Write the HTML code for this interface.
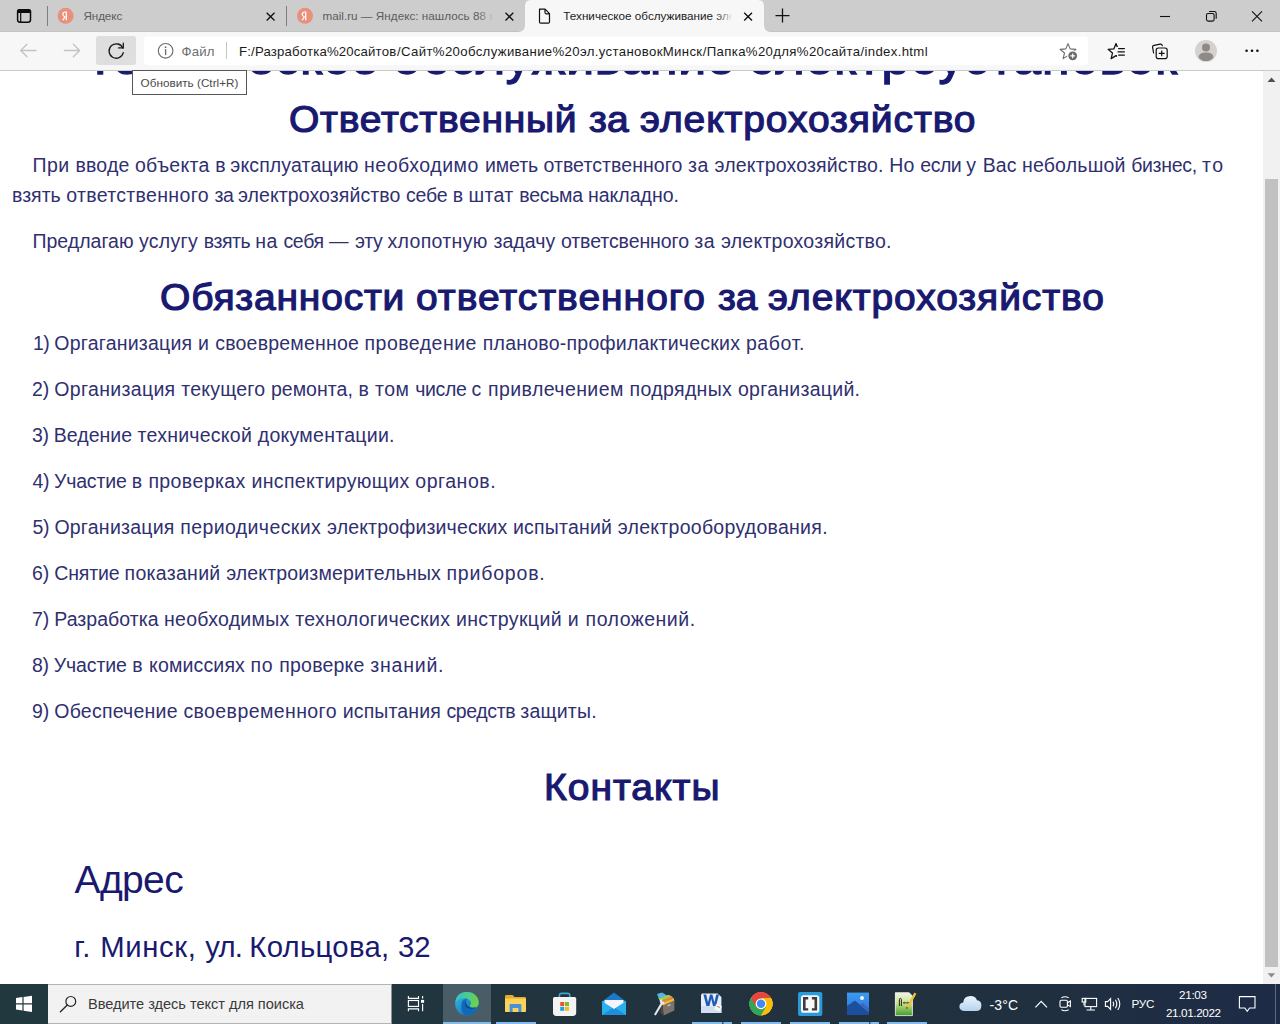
<!DOCTYPE html>
<html lang="ru"><head><meta charset="utf-8"><title>Техническое обслуживание электроустановок</title>
<style>
html,body{margin:0;padding:0;width:1280px;height:1024px;overflow:hidden;background:#fff;font-family:"Liberation Sans",sans-serif;}
.t{position:absolute;white-space:pre;line-height:1;font-family:"Liberation Sans",sans-serif;}
#tabbar{position:absolute;left:0;top:0;width:1280px;height:31px;background:#cdcdcd;border-bottom:1px solid #c3c3c3;}
#toolbar{position:absolute;left:0;top:32px;width:1280px;height:38px;background:#f7f7f7;border-bottom:1px solid #c9c9c9;}
#page{position:absolute;left:0;top:71px;width:1263px;height:913px;overflow:hidden;background:#fff;}
#pagein{position:absolute;left:0;top:-71px;width:1263px;height:1024px;}
#sb{position:absolute;left:1263px;top:71px;width:17px;height:913px;background:#f1f1f1;}
#sbthumb{position:absolute;left:2px;top:108px;width:13px;height:788px;background:#c1c1c1;}
#taskbar{position:absolute;left:0;top:984px;width:1280px;height:40px;background:linear-gradient(90deg,#22383f 0%,#21343e 45%,#21303e 78%,#1d2b47 100%);}
#layer{position:absolute;left:0;top:0;width:1280px;height:1024px;pointer-events:none;}
</style></head>
<body>
<div id="page"><div id="pagein">
<div class="t" style="left:85.00px;top:33.00px;font-size:48.5px;font-weight:normal;-webkit-text-stroke:1.4px #191970;transform-origin:0 0;transform:scaleX(1.03);color:#191970;letter-spacing:0.200px">Техническое </div>
<div class="t" style="left:393.00px;top:33.00px;font-size:48.5px;font-weight:normal;-webkit-text-stroke:1.4px #191970;transform-origin:0 0;transform:scaleX(1.03);color:#191970;letter-spacing:0.692px">обслуживание </div>
<div class="t" style="left:750.00px;top:33.00px;font-size:48.5px;font-weight:normal;-webkit-text-stroke:1.4px #191970;transform-origin:0 0;transform:scaleX(1.03);color:#191970;letter-spacing:0.971px">электроустановок</div>
<div class="t" style="left:289.00px;top:101.00px;font-size:37.5px;font-weight:normal;-webkit-text-stroke:1.2px #191970;transform-origin:0 0;transform:scaleX(1.04);color:#191970;letter-spacing:0.724px">Ответственный </div>
<div class="t" style="left:588.90px;top:101.00px;font-size:37.5px;font-weight:normal;-webkit-text-stroke:1.2px #191970;transform-origin:0 0;transform:scaleX(1.04);color:#191970;letter-spacing:0.126px">за </div>
<div class="t" style="left:639.70px;top:101.00px;font-size:37.5px;font-weight:normal;-webkit-text-stroke:1.2px #191970;transform-origin:0 0;transform:scaleX(1.04);color:#191970;letter-spacing:0.853px">электрохозяйство</div>
<div class="t" style="left:32.50px;top:156.00px;font-size:19.5px;font-weight:normal;color:#303070;letter-spacing:0.482px">При </div>
<div class="t" style="left:75.60px;top:156.00px;font-size:19.5px;font-weight:normal;color:#303070;letter-spacing:0.140px">вводе </div>
<div class="t" style="left:135.00px;top:156.00px;font-size:19.5px;font-weight:normal;color:#303070;letter-spacing:0.272px">объекта </div>
<div class="t" style="left:215.30px;top:156.00px;font-size:19.5px;font-weight:normal;color:#303070;letter-spacing:-0.391px">в </div>
<div class="t" style="left:230.30px;top:156.00px;font-size:19.5px;font-weight:normal;color:#303070;letter-spacing:0.131px">эксплуатацию </div>
<div class="t" style="left:364.00px;top:156.00px;font-size:19.5px;font-weight:normal;color:#303070;letter-spacing:0.548px">необходимо </div>
<div class="t" style="left:484.90px;top:156.00px;font-size:19.5px;font-weight:normal;color:#303070;letter-spacing:-0.086px">иметь </div>
<div class="t" style="left:543.40px;top:156.00px;font-size:19.5px;font-weight:normal;color:#303070;letter-spacing:0.080px">ответственного </div>
<div class="t" style="left:688.00px;top:156.00px;font-size:19.5px;font-weight:normal;color:#303070;letter-spacing:0.460px">за </div>
<div class="t" style="left:714.60px;top:156.00px;font-size:19.5px;font-weight:normal;color:#303070;letter-spacing:0.147px">электрохозяйство. </div>
<div class="t" style="left:889.20px;top:156.00px;font-size:19.5px;font-weight:normal;color:#303070;letter-spacing:0.247px">Но </div>
<div class="t" style="left:920.30px;top:156.00px;font-size:19.5px;font-weight:normal;color:#303070;letter-spacing:-0.469px">если </div>
<div class="t" style="left:966.25px;top:156.00px;font-size:19.5px;font-weight:normal;color:#303070;letter-spacing:0.689px">у </div>
<div class="t" style="left:982.80px;top:156.00px;font-size:19.5px;font-weight:normal;color:#303070;letter-spacing:0.042px">Вас </div>
<div class="t" style="left:1022.00px;top:156.00px;font-size:19.5px;font-weight:normal;color:#303070;letter-spacing:0.187px">небольшой </div>
<div class="t" style="left:1131.20px;top:156.00px;font-size:19.5px;font-weight:normal;color:#303070;letter-spacing:-0.313px">бизнес, </div>
<div class="t" style="left:1201.90px;top:156.00px;font-size:19.5px;font-weight:normal;color:#303070;letter-spacing:1.600px">то</div>
<div class="t" style="left:12.00px;top:186.00px;font-size:19.5px;font-weight:normal;color:#303070;letter-spacing:0.007px">взять </div>
<div class="t" style="left:66.20px;top:186.00px;font-size:19.5px;font-weight:normal;color:#303070;letter-spacing:0.333px">ответственного </div>
<div class="t" style="left:214.60px;top:186.00px;font-size:19.5px;font-weight:normal;color:#303070;letter-spacing:-0.606px">за </div>
<div class="t" style="left:238.00px;top:186.00px;font-size:19.5px;font-weight:normal;color:#303070;letter-spacing:0.081px">электрохозяйство </div>
<div class="t" style="left:405.90px;top:186.00px;font-size:19.5px;font-weight:normal;color:#303070;letter-spacing:-0.149px">себе </div>
<div class="t" style="left:452.75px;top:186.00px;font-size:19.5px;font-weight:normal;color:#303070;letter-spacing:-0.066px">в </div>
<div class="t" style="left:468.40px;top:186.00px;font-size:19.5px;font-weight:normal;color:#303070;letter-spacing:0.355px">штат </div>
<div class="t" style="left:519.30px;top:186.00px;font-size:19.5px;font-weight:normal;color:#303070;letter-spacing:-0.268px">весьма </div>
<div class="t" style="left:588.00px;top:186.00px;font-size:19.5px;font-weight:normal;color:#303070;letter-spacing:0.000px">накладно.</div>
<div class="t" style="left:32.50px;top:232.00px;font-size:19.5px;font-weight:normal;color:#303070;letter-spacing:0.005px">Предлагаю </div>
<div class="t" style="left:139.00px;top:232.00px;font-size:19.5px;font-weight:normal;color:#303070;letter-spacing:0.285px">услугу </div>
<div class="t" style="left:203.70px;top:232.00px;font-size:19.5px;font-weight:normal;color:#303070;letter-spacing:-0.426px">взять </div>
<div class="t" style="left:255.30px;top:232.00px;font-size:19.5px;font-weight:normal;color:#303070;letter-spacing:0.351px">на </div>
<div class="t" style="left:283.40px;top:232.00px;font-size:19.5px;font-weight:normal;color:#303070;letter-spacing:-0.299px">себя </div>
<div class="t" style="left:329.00px;top:232.00px;font-size:19.5px;font-weight:normal;color:#303070;letter-spacing:0.539px">— </div>
<div class="t" style="left:355.00px;top:232.00px;font-size:19.5px;font-weight:normal;color:#303070;letter-spacing:-0.336px">эту </div>
<div class="t" style="left:387.50px;top:232.00px;font-size:19.5px;font-weight:normal;color:#303070;letter-spacing:0.323px">хлопотную </div>
<div class="t" style="left:493.40px;top:232.00px;font-size:19.5px;font-weight:normal;color:#303070;letter-spacing:0.083px">задачу </div>
<div class="t" style="left:560.90px;top:232.00px;font-size:19.5px;font-weight:normal;color:#303070;letter-spacing:-0.076px">ответсвенного </div>
<div class="t" style="left:694.30px;top:232.00px;font-size:19.5px;font-weight:normal;color:#303070;letter-spacing:0.460px">за </div>
<div class="t" style="left:720.90px;top:232.00px;font-size:19.5px;font-weight:normal;color:#303070;letter-spacing:0.256px">электрохозяйство.</div>
<div class="t" style="left:159.50px;top:279.00px;font-size:37.5px;font-weight:normal;-webkit-text-stroke:1.2px #191970;transform-origin:0 0;transform:scaleX(1.04);color:#191970;letter-spacing:0.764px">Обязанности </div>
<div class="t" style="left:416.30px;top:279.00px;font-size:37.5px;font-weight:normal;-webkit-text-stroke:1.2px #191970;transform-origin:0 0;transform:scaleX(1.04);color:#191970;letter-spacing:0.955px">ответственного </div>
<div class="t" style="left:718.00px;top:279.00px;font-size:37.5px;font-weight:normal;-webkit-text-stroke:1.2px #191970;transform-origin:0 0;transform:scaleX(1.04);color:#191970;letter-spacing:-0.034px">за </div>
<div class="t" style="left:768.30px;top:279.00px;font-size:37.5px;font-weight:normal;-webkit-text-stroke:1.2px #191970;transform-origin:0 0;transform:scaleX(1.04);color:#191970;letter-spacing:0.878px">электрохозяйство</div>
<div class="t" style="left:33.00px;top:334.00px;font-size:19.5px;font-weight:normal;color:#303070;letter-spacing:-0.489px">1) </div>
<div class="t" style="left:54.30px;top:334.00px;font-size:19.5px;font-weight:normal;color:#303070;letter-spacing:0.224px">Оргаганизация </div>
<div class="t" style="left:198.00px;top:334.00px;font-size:19.5px;font-weight:normal;color:#303070;letter-spacing:0.469px">и </div>
<div class="t" style="left:215.25px;top:334.00px;font-size:19.5px;font-weight:normal;color:#303070;letter-spacing:0.201px">своевременное </div>
<div class="t" style="left:364.60px;top:334.00px;font-size:19.5px;font-weight:normal;color:#303070;letter-spacing:0.471px">проведение </div>
<div class="t" style="left:482.75px;top:334.00px;font-size:19.5px;font-weight:normal;color:#303070;letter-spacing:0.237px">планово-профилактических </div>
<div class="t" style="left:745.90px;top:334.00px;font-size:19.5px;font-weight:normal;color:#303070;letter-spacing:0.620px">работ.</div>
<div class="t" style="left:32.00px;top:380.00px;font-size:19.5px;font-weight:normal;color:#303070;letter-spacing:-0.155px">2) </div>
<div class="t" style="left:54.30px;top:380.00px;font-size:19.5px;font-weight:normal;color:#303070;letter-spacing:0.327px">Организация </div>
<div class="t" style="left:181.25px;top:380.00px;font-size:19.5px;font-weight:normal;color:#303070;letter-spacing:0.218px">текущего </div>
<div class="t" style="left:270.90px;top:380.00px;font-size:19.5px;font-weight:normal;color:#303070;letter-spacing:0.043px">ремонта, </div>
<div class="t" style="left:358.40px;top:380.00px;font-size:19.5px;font-weight:normal;color:#303070;letter-spacing:0.409px">в </div>
<div class="t" style="left:375.00px;top:380.00px;font-size:19.5px;font-weight:normal;color:#303070;letter-spacing:0.465px">том </div>
<div class="t" style="left:415.25px;top:380.00px;font-size:19.5px;font-weight:normal;color:#303070;letter-spacing:-0.367px">числе </div>
<div class="t" style="left:471.50px;top:380.00px;font-size:19.5px;font-weight:normal;color:#303070;letter-spacing:0.664px">с </div>
<div class="t" style="left:488.00px;top:380.00px;font-size:19.5px;font-weight:normal;color:#303070;letter-spacing:0.421px">привлечением </div>
<div class="t" style="left:629.60px;top:380.00px;font-size:19.5px;font-weight:normal;color:#303070;letter-spacing:0.352px">подрядных </div>
<div class="t" style="left:738.00px;top:380.00px;font-size:19.5px;font-weight:normal;color:#303070;letter-spacing:0.273px">организаций.</div>
<div class="t" style="left:32.00px;top:426.00px;font-size:19.5px;font-weight:normal;color:#303070;letter-spacing:-0.322px">3) </div>
<div class="t" style="left:53.80px;top:426.00px;font-size:19.5px;font-weight:normal;color:#303070;letter-spacing:0.015px">Ведение </div>
<div class="t" style="left:137.50px;top:426.00px;font-size:19.5px;font-weight:normal;color:#303070;letter-spacing:0.258px">технической </div>
<div class="t" style="left:257.80px;top:426.00px;font-size:19.5px;font-weight:normal;color:#303070;letter-spacing:0.267px">документации.</div>
<div class="t" style="left:32.60px;top:472.00px;font-size:19.5px;font-weight:normal;color:#303070;letter-spacing:-0.455px">4) </div>
<div class="t" style="left:54.00px;top:472.00px;font-size:19.5px;font-weight:normal;color:#303070;letter-spacing:-0.179px">Участие </div>
<div class="t" style="left:131.80px;top:472.00px;font-size:19.5px;font-weight:normal;color:#303070;letter-spacing:0.409px">в </div>
<div class="t" style="left:148.40px;top:472.00px;font-size:19.5px;font-weight:normal;color:#303070;letter-spacing:0.404px">проверках </div>
<div class="t" style="left:251.50px;top:472.00px;font-size:19.5px;font-weight:normal;color:#303070;letter-spacing:0.350px">инспектирующих </div>
<div class="t" style="left:415.25px;top:472.00px;font-size:19.5px;font-weight:normal;color:#303070;letter-spacing:0.536px">органов.</div>
<div class="t" style="left:32.50px;top:518.00px;font-size:19.5px;font-weight:normal;color:#303070;letter-spacing:-0.289px">5) </div>
<div class="t" style="left:54.40px;top:518.00px;font-size:19.5px;font-weight:normal;color:#303070;letter-spacing:0.235px">Организация </div>
<div class="t" style="left:180.25px;top:518.00px;font-size:19.5px;font-weight:normal;color:#303070;letter-spacing:0.397px">периодических </div>
<div class="t" style="left:327.00px;top:518.00px;font-size:19.5px;font-weight:normal;color:#303070;letter-spacing:0.154px">электрофизических </div>
<div class="t" style="left:513.00px;top:518.00px;font-size:19.5px;font-weight:normal;color:#303070;letter-spacing:0.200px">испытаний </div>
<div class="t" style="left:617.75px;top:518.00px;font-size:19.5px;font-weight:normal;color:#303070;letter-spacing:0.276px">электрооборудования.</div>
<div class="t" style="left:32.00px;top:564.00px;font-size:19.5px;font-weight:normal;color:#303070;letter-spacing:-0.155px">6) </div>
<div class="t" style="left:54.30px;top:564.00px;font-size:19.5px;font-weight:normal;color:#303070;letter-spacing:-0.171px">Снятие </div>
<div class="t" style="left:124.60px;top:564.00px;font-size:19.5px;font-weight:normal;color:#303070;letter-spacing:0.285px">показаний </div>
<div class="t" style="left:226.20px;top:564.00px;font-size:19.5px;font-weight:normal;color:#303070;letter-spacing:0.141px">электроизмерительных </div>
<div class="t" style="left:446.50px;top:564.00px;font-size:19.5px;font-weight:normal;color:#303070;letter-spacing:0.812px">приборов.</div>
<div class="t" style="left:32.10px;top:610.00px;font-size:19.5px;font-weight:normal;color:#303070;letter-spacing:-0.205px">7) </div>
<div class="t" style="left:54.25px;top:610.00px;font-size:19.5px;font-weight:normal;color:#303070;letter-spacing:0.036px">Разработка </div>
<div class="t" style="left:164.00px;top:610.00px;font-size:19.5px;font-weight:normal;color:#303070;letter-spacing:0.292px">необходимых </div>
<div class="t" style="left:295.30px;top:610.00px;font-size:19.5px;font-weight:normal;color:#303070;letter-spacing:0.296px">технологических </div>
<div class="t" style="left:455.90px;top:610.00px;font-size:19.5px;font-weight:normal;color:#303070;letter-spacing:0.384px">инструкций </div>
<div class="t" style="left:567.75px;top:610.00px;font-size:19.5px;font-weight:normal;color:#303070;letter-spacing:0.769px">и </div>
<div class="t" style="left:585.60px;top:610.00px;font-size:19.5px;font-weight:normal;color:#303070;letter-spacing:0.489px">положений.</div>
<div class="t" style="left:32.00px;top:656.00px;font-size:19.5px;font-weight:normal;color:#303070;letter-spacing:-0.355px">8) </div>
<div class="t" style="left:53.70px;top:656.00px;font-size:19.5px;font-weight:normal;color:#303070;letter-spacing:-0.092px">Участие </div>
<div class="t" style="left:132.20px;top:656.00px;font-size:19.5px;font-weight:normal;color:#303070;letter-spacing:0.509px">в </div>
<div class="t" style="left:149.00px;top:656.00px;font-size:19.5px;font-weight:normal;color:#303070;letter-spacing:0.158px">комиссиях </div>
<div class="t" style="left:250.60px;top:656.00px;font-size:19.5px;font-weight:normal;color:#303070;letter-spacing:0.624px">по </div>
<div class="t" style="left:279.30px;top:656.00px;font-size:19.5px;font-weight:normal;color:#303070;letter-spacing:0.206px">проверке </div>
<div class="t" style="left:370.25px;top:656.00px;font-size:19.5px;font-weight:normal;color:#303070;letter-spacing:0.792px">знаний.</div>
<div class="t" style="left:32.00px;top:702.00px;font-size:19.5px;font-weight:normal;color:#303070;letter-spacing:-0.155px">9) </div>
<div class="t" style="left:54.30px;top:702.00px;font-size:19.5px;font-weight:normal;color:#303070;letter-spacing:0.224px">Обеспечение </div>
<div class="t" style="left:183.40px;top:702.00px;font-size:19.5px;font-weight:normal;color:#303070;letter-spacing:0.409px">своевременного </div>
<div class="t" style="left:342.75px;top:702.00px;font-size:19.5px;font-weight:normal;color:#303070;letter-spacing:0.133px">испытания </div>
<div class="t" style="left:446.50px;top:702.00px;font-size:19.5px;font-weight:normal;color:#303070;letter-spacing:-0.389px">средств </div>
<div class="t" style="left:520.25px;top:702.00px;font-size:19.5px;font-weight:normal;color:#303070;letter-spacing:0.208px">защиты.</div>
<div class="t" style="left:544.00px;top:769.00px;font-size:37.5px;font-weight:normal;-webkit-text-stroke:1.2px #191970;transform-origin:0 0;transform:scaleX(1.04);color:#191970;letter-spacing:0.962px">Контакты</div>
<div class="t" style="left:74.50px;top:860.00px;font-size:39px;font-weight:normal;color:#191970;letter-spacing:-0.625px">Адрес</div>
<div class="t" style="left:74.25px;top:932.00px;font-size:29.3px;font-weight:normal;color:#191970;letter-spacing:0.853px">г. </div>
<div class="t" style="left:100.20px;top:932.00px;font-size:29.3px;font-weight:normal;color:#191970;letter-spacing:0.628px">Минск, </div>
<div class="t" style="left:205.30px;top:932.00px;font-size:29.3px;font-weight:normal;color:#191970;letter-spacing:-0.860px">ул. </div>
<div class="t" style="left:249.25px;top:932.00px;font-size:29.3px;font-weight:normal;color:#191970;letter-spacing:0.311px">Кольцова, </div>
<div class="t" style="left:398.00px;top:932.00px;font-size:29.3px;font-weight:normal;color:#191970;letter-spacing:0.000px">32</div>
</div></div>
<div id="sb"><div id="sbthumb"></div>
<svg style="position:absolute;left:0;top:0" width="17" height="17"><path d="M4.5 11 L8.5 6.5 L12.5 11 Z" fill="#505050"/></svg>
<svg style="position:absolute;left:0;bottom:0" width="17" height="17"><path d="M4.6 6.2 L8.4 10.4 L12.2 6.2 Z" fill="#8a8a8a"/></svg>
</div>
<div id="tabbar"></div>
<div id="toolbar"></div>
<div id="taskbar"></div>
<div id="layer">
<!-- ===== TAB BAR ===== -->
<svg style="position:absolute;left:0;top:0" width="1280" height="71" viewBox="0 0 1280 71">
  <!-- active tab shape -->
  <path d="M518 32 Q525 32 525 25 L525 6 Q525 0 531 0 L758 0 Q764 0 764 6 L764 25 Q764 32 771 32 Z" fill="#f7f7f7"/>
  <!-- tab actions icon -->
  <rect x="17.6" y="9.7" width="12.9" height="12.5" rx="2.4" fill="none" stroke="#0c0c0c" stroke-width="1.5"/>
  <path d="M17 12.9 V11.6 Q17 9 19.6 9 L28.5 9 Q31.1 9 31.1 11.6 V12.9 Z" fill="#0c0c0c"/>
  <line x1="20.7" y1="12.8" x2="20.7" y2="22" stroke="#0c0c0c" stroke-width="1.2"/>
  <!-- separators -->
  <line x1="47.5" y1="6" x2="47.5" y2="26" stroke="#7d7d7d" stroke-width="1"/>
  <line x1="286.5" y1="6" x2="286.5" y2="26" stroke="#7d7d7d" stroke-width="1"/>
  <!-- yandex favicons -->
  <circle cx="65.6" cy="15.8" r="8" fill="#e9907d"/>
  <path d="M66.9 11.4 h-1.6 c-1.9 0 -3 1.1 -3 2.7 c0 1.3 0.6 2.1 1.8 2.9 l-2 3.2 h1.5 l2.1 -3.4 l-0.8 -0.5 c-0.9 -0.6 -1.3 -1.1 -1.3 -2.1 c0 -1 0.7 -1.6 1.8 -1.6 h0.3 v7.6 h1.3 Z" fill="#fff"/>
  <circle cx="305" cy="15.8" r="8" fill="#e9907d"/>
  <path d="M306.3 11.4 h-1.6 c-1.9 0 -3 1.1 -3 2.7 c0 1.3 0.6 2.1 1.8 2.9 l-2 3.2 h1.5 l2.1 -3.4 l-0.8 -0.5 c-0.9 -0.6 -1.3 -1.1 -1.3 -2.1 c0 -1 0.7 -1.6 1.8 -1.6 h0.3 v7.6 h1.3 Z" fill="#fff"/>
  <!-- close x's -->
  <g stroke="#111" stroke-width="1.35" stroke-linecap="butt">
    <path d="M266.7 12.7 L274.5 20.5 M274.5 12.7 L266.7 20.5"/>
    <path d="M505.5 12.7 L513.3 20.5 M513.3 12.7 L505.5 20.5"/>
    <path d="M744.2 12.7 L752.0 20.5 M752.0 12.7 L744.2 20.5"/>
  </g>
  <!-- page icon -->
  <path d="M539.5 9.2 h5.6 l4.4 4.4 v8.4 q0 1.2 -1.2 1.2 h-7.6 q-1.2 0 -1.2 -1.2 v-11.6 q0 -1.2 1.2 -1.2 Z M545 9.4 v3.2 q0 1.2 1.2 1.2 h3.2" fill="none" stroke="#111" stroke-width="1.2" stroke-linejoin="round"/>
  <!-- new tab plus -->
  <path d="M775.5 15.6 H789.5 M782.5 8.6 V22.6" stroke="#111" stroke-width="1.3" fill="none"/>
  <!-- window controls -->
  <path d="M1160 16.5 H1170" stroke="#111" stroke-width="1.1"/>
  <rect x="1206.5" y="13.5" width="7.6" height="7.6" rx="1.6" fill="none" stroke="#111" stroke-width="1.1"/>
  <path d="M1209 11.5 H1214.3 Q1216.2 11.5 1216.2 13.4 V18.8" fill="none" stroke="#111" stroke-width="1.1"/>
  <path d="M1252 11.3 L1262 21.3 M1262 11.3 L1252 21.3" stroke="#111" stroke-width="1.1"/>

  <!-- ===== TOOLBAR ===== -->
  <!-- back / forward (disabled) -->
  <g stroke="#c3c3c3" stroke-width="1.3" fill="none" stroke-linecap="round" stroke-linejoin="round">
    <path d="M36 50.5 H21 M27 44.2 L20.7 50.5 L27 56.8"/>
    <path d="M64.3 50.5 H79.3 M73.3 44.2 L79.6 50.5 L73.3 56.8"/>
  </g>
  <!-- reload hover bg -->
  <rect x="96" y="36" width="40" height="29" rx="3" fill="#dedede"/>
  <path d="M122.9 48.2 A7.2 7.2 0 1 0 123.3 52.6" fill="none" stroke="#1a1a1a" stroke-width="1.3" stroke-linecap="round"/>
  <path d="M118.6 47.9 H123.3 V43.2" fill="none" stroke="#1a1a1a" stroke-width="1.3" stroke-linecap="round" stroke-linejoin="round"/>
  <!-- address bar -->
  <rect x="144" y="36.4" width="944" height="28.8" rx="4" fill="#ffffff"/>
  <circle cx="165.6" cy="50.8" r="7.3" fill="none" stroke="#6a6a6a" stroke-width="1.1"/>
  <path d="M165.6 49.6 V54.6" stroke="#6a6a6a" stroke-width="1.3" stroke-linecap="round"/>
  <circle cx="165.6" cy="47.2" r="0.9" fill="#6a6a6a"/>
  <line x1="226.5" y1="42" x2="226.5" y2="59" stroke="#c4c4c4" stroke-width="1"/>
  <!-- star plus -->
  <path d="M1068.00 43.60 L1070.17 48.91 L1075.89 49.34 L1071.52 53.04 L1072.88 58.61 L1068.00 55.60 L1063.12 58.61 L1064.48 53.04 L1060.11 49.34 L1065.83 48.91 Z" fill="none" stroke="#6a6a6a" stroke-width="1.1" stroke-linejoin="round"/>
  <circle cx="1072.7" cy="55.8" r="5.6" fill="#ffffff"/>
  <circle cx="1072.7" cy="55.8" r="4.4" fill="#6a6a6a"/>
  <path d="M1070.3 55.8 H1075.1 M1072.7 53.4 V58.2" stroke="#fff" stroke-width="1.2"/>
  <!-- favorites -->
  <path d="M1116.00 43.60 L1118.17 48.91 L1123.89 49.34 L1119.52 53.04 L1120.88 58.61 L1116.00 55.60 L1111.12 58.61 L1112.48 53.04 L1108.11 49.34 L1113.83 48.91 Z" fill="none" stroke="#111" stroke-width="1.25" stroke-linejoin="round"/>
  <rect x="1117" y="47" width="9" height="13" fill="#f7f7f7"/>
  <path d="M1118.6 48.6 H1124.4 M1118 51.8 H1124.4 M1118.6 55 H1124.4" stroke="#111" stroke-width="1.25" stroke-linecap="round"/>
  <!-- collections -->
  <path d="M1153.6 53 l-1 -5.6 q-0.3 -1.8 1.5 -2.1 l6 -1.1 q1.8 -0.3 2.2 1.4" fill="none" stroke="#111" stroke-width="1.2" stroke-linecap="round"/>
  <rect x="1156.2" y="48" width="11" height="10.6" rx="2.2" fill="none" stroke="#111" stroke-width="1.2"/>
  <path d="M1158.8 53.3 H1164.6 M1161.7 50.4 V56.2" stroke="#111" stroke-width="1.2"/>
  <!-- avatar -->
  <circle cx="1206" cy="51" r="11" fill="#d4d1cf"/>
  <circle cx="1206" cy="47.4" r="4" fill="#8f8a86"/>
  <path d="M1198.6 57.4 Q1198.6 52.6 1206 52.6 Q1213.4 52.6 1213.4 57.4 Q1210.6 61 1206 61 Q1201.4 61 1198.6 57.4 Z" fill="#8f8a86"/>
  <!-- dots -->
  <circle cx="1246.6" cy="50.8" r="1.3" fill="#111"/><circle cx="1252" cy="50.8" r="1.3" fill="#111"/><circle cx="1257.4" cy="50.8" r="1.3" fill="#111"/>
</svg>
<!-- fades on tab titles -->
<div style="z-index:5;position:absolute;left:478px;top:8px;width:22px;height:18px;background:linear-gradient(90deg,rgba(205,205,205,0),#cdcdcd 70%)"></div>
<div style="z-index:5;position:absolute;left:716px;top:8px;width:22px;height:18px;background:linear-gradient(90deg,rgba(247,247,247,0),#f7f7f7 75%)"></div>
<!-- tooltip -->
<div style="position:absolute;left:132px;top:70px;width:113px;height:23px;background:#fff;border:1px solid #575757;"></div>

<!-- ===== TASKBAR ===== -->
<svg style="position:absolute;left:0;top:984px" width="1280" height="40" viewBox="0 984 1280 40">
  <!-- search box -->
  <rect x="48" y="984" width="343.5" height="40" fill="#f2f2f2"/>
  <rect x="48" y="984" width="343.5" height="1" fill="#b4b4b4"/>
  <rect x="48" y="1023" width="343.5" height="1" fill="#b4b4b4"/>
  <!-- windows logo -->
  <path d="M16 998 L22.4 997.1 V1003.2 H16 Z M23.6 996.9 L32 995.7 V1003.2 H23.6 Z M16 1004.4 H22.4 V1010.5 L16 1009.6 Z M23.6 1004.4 H32 V1011.9 L23.6 1010.7 Z" fill="#ffffff"/>
  <!-- search icon -->
  <circle cx="70.8" cy="1001.4" r="4.9" fill="none" stroke="#222" stroke-width="1.2"/>
  <path d="M67.3 1005 L60.4 1011.8" stroke="#222" stroke-width="1.3" stroke-linecap="round"/>
  <!-- task view -->
  <g fill="none" stroke="#fff" stroke-width="1.15">
    <path d="M408.4 996 V998.3 H418.5 V996 M408.4 1011.2 V1008.9 H418.5 V1011.2"/>
    <rect x="408.4" y="1000.5" width="10.1" height="5.9"/>
    <path d="M422.6 996 V998.6 M422.6 1004 V1011.2"/>
  </g>
  <rect x="421" y="999.9" width="3.1" height="2.9" fill="#fff"/>
  <!-- edge active bg -->
  <rect x="443" y="984" width="48" height="40" fill="#4a5d66"/>
  <!-- underlines -->
  <g fill="#82bcee">
    <rect x="443" y="1022" width="48" height="2"/>
    <rect x="496" y="1022" width="40" height="2"/>
    <rect x="692" y="1022" width="40" height="2"/>
    <rect x="741" y="1022" width="40" height="2"/>
    <rect x="790" y="1022" width="40" height="2"/>
    <rect x="839" y="1022" width="40" height="2"/>
    <rect x="887" y="1022" width="40" height="2"/>
  </g>
  <rect x="722" y="1022" width="1.5" height="2" fill="#3d5566"/>
  <rect x="869" y="1022" width="1.5" height="2" fill="#3d5566"/>
  <rect x="1275" y="984" width="1" height="40" fill="#5e6a80"/>
    <defs>
    <linearGradient id="edgeA" x1="0" y1="0" x2="1" y2="1"><stop offset="0" stop-color="#35c1f1"/><stop offset="1" stop-color="#0c59a4"/></linearGradient>
    <linearGradient id="edgeB" x1="0" y1="0" x2="1" y2="0.4"><stop offset="0" stop-color="#2bc3d2"/><stop offset="1" stop-color="#6ad24b"/></linearGradient>
    <linearGradient id="phot" x1="0" y1="0" x2="0" y2="1"><stop offset="0" stop-color="#3b9cf0"/><stop offset="1" stop-color="#2f6fd6"/></linearGradient>
    <linearGradient id="npp" x1="0" y1="0" x2="0" y2="1"><stop offset="0" stop-color="#f4f7e8"/><stop offset="0.45" stop-color="#c9e38c"/><stop offset="1" stop-color="#3c9a2a"/></linearGradient>
    <linearGradient id="cloud" x1="0" y1="0" x2="0" y2="1"><stop offset="0" stop-color="#eaf4fc"/><stop offset="1" stop-color="#b5d3ee"/></linearGradient>
  </defs>
  <!-- Edge -->
  <g>
    <circle cx="467" cy="1003.8" r="11.8" fill="url(#edgeA)"/>
    <path d="M455.6 1001 C456.5 994.6 461.4 992 467 992 C474 992 478.8 997 478.8 1002.4 C478.8 1006.2 476 1008.2 473.2 1008.2 C470.6 1008.2 469.4 1006.8 470 1005.6 C470.8 1004.4 471.2 1003.4 470.8 1002 C470 999.4 466.8 997.6 463.4 998 C459.6 998.4 456.8 1000 455.6 1003 Z" fill="url(#edgeB)"/>
    <path d="M461.6 1004.6 C461.4 1000.8 464.4 998.6 467.4 999 C465.8 1000.4 465.8 1003 467.2 1004.8 C468.8 1007 472.2 1008.6 476 1007 C474 1012.2 469.6 1015.4 465.4 1015.4 C461.6 1013.6 461 1008.4 461.6 1004.6 Z" fill="#1269b8"/>
    <path d="M466.4 1001 C465.4 1003 466 1005.2 467.6 1006.4 C469.6 1008 472.6 1008.2 475.4 1007.2 C473.4 1008.8 469.4 1009.6 466.8 1007.6 C464.8 1006 464.8 1002.8 466.4 1001 Z" fill="#0a3f7e"/>
  </g>
  <!-- Explorer -->
  <g>
    <path d="M505 996.4 Q505 995 506.4 995 H512.6 L514.6 997 H524.8 Q526 997 526 998.2 V1001 H505 Z" fill="#e9a92e"/>
    <rect x="505" y="998.4" width="21" height="13.6" rx="0.8" fill="#fbd35b"/>
    <path d="M509.6 1012 V1005 Q509.6 1004 510.6 1004 H520.4 Q521.4 1004 521.4 1005 V1012 H518.4 V1008 H512.6 V1012 Z" fill="#4a90d9"/>
  </g>
  <!-- Store -->
  <g>
    <path d="M559.4 998 V995.6 Q559.4 993.4 561.6 993.4 H567.6 Q569.8 993.4 569.8 995.6 V998" fill="none" stroke="#3aa7cf" stroke-width="1.6"/>
    <path d="M553 998.6 Q553 997 554.6 997 H574.6 Q576.2 997 576.2 998.6 V1012.6 Q576.2 1016 572.8 1016 H556.4 Q553 1016 553 1012.6 Z" fill="#f3f3f3"/>
    <rect x="560.2" y="1002" width="4" height="4" fill="#f0532a"/>
    <rect x="565" y="1002" width="4" height="4" fill="#7cbb2c"/>
    <rect x="560.2" y="1006.8" width="4" height="4" fill="#1fa1e6"/>
    <rect x="565" y="1006.8" width="4" height="4" fill="#fdb813"/>
  </g>
  <!-- Mail -->
  <g>
    <path d="M602 1001.4 L614 992.6 L626 1001.4 Z" fill="#1a79c9"/>
    <rect x="602" y="1001" width="24" height="14" fill="#28a8ea"/>
    <path d="M604.6 1000 H623.4 V1003 L614 1009 L604.6 1003 Z" fill="#f2f6fa"/>
    <path d="M602 1001.4 L614 1009.4 L626 1001.4 V1015 H602 Z" fill="#2bb0ee"/>
    <path d="M602 1015 L612.4 1008.2 L614 1009.4 L615.6 1008.2 L626 1015 Z" fill="#1f8fdb"/>
  </g>
  <!-- Tool / archive icon -->
  <g>
    <path d="M657 994 L662 992.4 L668.8 996.4 L659.6 1000.4 Z" fill="#56b4e6"/>
    <path d="M658.4 998.4 L668.8 994.8 L672.8 997.2 L661.6 1002.6 Z" fill="#97d24a"/>
    <path d="M660 1001 L671.6 996.6 L674 998.6 L663 1004 Z" fill="#e8843a"/>
    <path d="M661.4 1003.4 L673.8 998.4 L674.4 1001 L663.4 1006.2 Z" fill="#f2c230"/>
    <path d="M662.6 1005.4 L674.4 1000.2 V1010.4 L663.6 1015.4 Z" fill="#7b736c"/>
    <path d="M663.6 1015.4 L660.6 1013 V1004 L662.6 1005.4 Z" fill="#4e4843"/>
    <path d="M654 1014.4 L660.4 1003.4 L659.6 1000.4 L661.8 999 L662.4 1001.8 L664 1001.6 L664.6 1003.6 L662 1005 L655.8 1015.4 Z" fill="#e6e6e6"/>
    <rect x="667.4" y="1004.6" width="3" height="1.4" fill="#cfc8c0" transform="rotate(-24 669 1005)"/>
  </g>
  <!-- Word -->
  <g>
    <path d="M702 993.6 H717.6 L721.4 997 V1013 H701 V995 Z" fill="#e8eef7"/>
    <path d="M701 1006 H721.4 V1013 H701 Z" fill="#d3dff0"/>
    <path d="M703.4 994.6 L706.2 994.6 L708 1002.4 L710 994.6 L712.4 994.6 L714.4 1002.4 L716.2 994.6 L719 994.6 L716 1006 L713 1006 L711.2 998.8 L709.4 1006 L706.4 1006 Z" fill="#1f5bb5"/>
    <path d="M716 1004 L721.8 1006 L720 1011.4 L714.4 1009.6 Z" fill="#f6f6f6"/>
    <path d="M717 1006.4 L720 1007.4" stroke="#d9534f" stroke-width="0.8"/>
  </g>
  <!-- Chrome -->
  <g>
    <circle cx="761" cy="1003.8" r="11.5" fill="#fff"/>
    <path d="M761 1003.8 L751.04 998.05 A11.5 11.5 0 0 1 770.96 998.05 Z" fill="#e8453c"/>
    <path d="M761 1003.8 L770.96 998.05 A11.5 11.5 0 0 1 761 1015.3 Z" fill="#fbbd05"/>
    <path d="M761 1003.8 L761 1015.3 A11.5 11.5 0 0 1 751.04 998.05 Z" fill="#34a552"/>
    <path d="M761 998.05 H770.96 A11.5 11.5 0 0 0 751.04 998.05 L756 1006.6 Z" fill="#e8453c"/>
    <path d="M765.98 1006.67 L761 1015.3 A11.5 11.5 0 0 0 770.96 998.05 H761 Z" fill="#fbbd05"/>
    <path d="M756.02 1006.67 L751.04 998.05 A11.5 11.5 0 0 0 761 1015.3 L765.98 1006.67 Z" fill="#34a552"/>
    <circle cx="761" cy="1003.8" r="5.4" fill="#fff"/>
    <circle cx="761" cy="1003.8" r="4.2" fill="#4688f1"/>
  </g>
  <!-- Brackets -->
  <g>
    <rect x="798" y="992" width="24.3" height="24" rx="2" fill="#2a9bd8"/>
    <rect x="801" y="995.2" width="18.3" height="17.6" rx="2.6" fill="#f6f8fa"/>
    <path d="M808.2 997 H803 V1010.6 H808.2 V1008.2 H805.6 V999.4 H808.2 Z" fill="#43393a"/>
    <path d="M811.9 997 H817.1 V1010.6 H811.9 V1008.2 H814.5 V999.4 H811.9 Z" fill="#43393a"/>
  </g>
  <!-- Photos -->
  <g>
    <rect x="847" y="992.6" width="22" height="22.4" fill="url(#phot)"/>
    <circle cx="862" cy="998" r="2" fill="#eef6ff"/>
    <path d="M847 1006 L855 1000.6 L869 1012.6 V1015 H847 Z" fill="#1d4f9f"/>
    <path d="M860 1005 L862.8 1003 L869 1008.6 V1012.6 Z" fill="#3a66c4"/>
  </g>
  <!-- Notepad++ -->
  <g>
    <path d="M895 992.4 H909 L912.8 996 V1016 H895 Z" fill="url(#npp)"/>
    <path d="M895.4 992.8 H909 L912.4 996 V1015.6 H895.4 Z" fill="none" stroke="#e8e8e8" stroke-width="0.8"/>
    <path d="M899.4 1006 V999.6 Q899.4 998.4 900.4 998.4 Q901.4 998.4 901.4 999.6 V1006" fill="none" stroke="#222" stroke-width="1"/>
    <path d="M903.6 1002.8 H908.6 M904.4 1001.8 L903.4 1002.8 L904.4 1003.8 M907.8 1001.8 L908.8 1002.8 L907.8 1003.8" fill="none" stroke="#222" stroke-width="0.8"/>
    <path d="M906.4 1006.8 L914.4 992.6 L916.4 993.8 L908.6 1008 L906 1009 Z" fill="#e8c33a"/>
    <path d="M906.4 1006.8 L908.6 1008 L906 1009 Z" fill="#6b4a12"/>
  </g>
  <!-- Weather cloud -->
  <g>
    <path d="M964.8 1011 Q959.4 1011 959.4 1006.6 Q959.4 1003 963.2 1002.4 Q964 996 970.6 996 Q975.4 996 977 1000.2 Q981.4 1000.4 981.4 1005.4 Q981.4 1011 976 1011 Z" fill="url(#cloud)"/>
  </g>
  <!-- tray: chevron -->
  <path d="M1035.4 1007.4 L1041.2 1001.4 L1047 1007.4" fill="none" stroke="#fff" stroke-width="1.2"/>
  <!-- meet now -->
  <g fill="none" stroke="#fff" stroke-width="1.1">
    <rect x="1060" y="1000.2" width="7.4" height="7" rx="1.2"/>
    <path d="M1067.4 1002.8 L1070.4 1001 V1006.6 L1067.4 1004.8"/>
    <path d="M1061.4 997.8 Q1065 995.8 1068.6 997.8 M1061.4 1009.8 Q1065 1011.8 1068.6 1009.8"/>
  </g>
  <!-- network -->
  <g fill="none" stroke="#fff" stroke-width="1.1">
    <rect x="1085" y="998.4" width="11.6" height="8.2"/>
    <path d="M1090.8 1006.6 V1009.6 M1086.6 1010 H1095"/>
    <rect x="1082.2" y="998.4" width="3.6" height="3.6"/>
    <path d="M1084 1002 V1005.6"/>
  </g>
  <!-- volume -->
  <g fill="none" stroke="#fff" stroke-width="1.1">
    <path d="M1105.4 1001.6 H1107.6 L1110.6 998.6 V1009.4 L1107.6 1006.4 H1105.4 Z"/>
    <path d="M1113 1001.6 Q1114.6 1004 1113 1006.4 M1115.4 999.8 Q1118.2 1004 1115.4 1008.2 M1117.8 998 Q1121.8 1004 1117.8 1010"/>
  </g>
  <!-- notification -->
  <path d="M1239.4 996.6 H1255 V1008 H1249.6 L1247.2 1011.4 L1244.8 1008 H1239.4 Z" fill="none" stroke="#fff" stroke-width="1.1"/>

</svg>

<div class="t" style="left:83.40px;top:10.00px;font-size:11.7px;font-weight:normal;color:#5c5c5c;letter-spacing:-0.080px">Яндекс</div>
<div class="t" style="left:322.40px;top:10.00px;font-size:11.7px;font-weight:normal;color:#5c5c5c;letter-spacing:0.021px">mail.ru — Яндекс: нашлось 88 м</div>
<div class="t" style="left:563.30px;top:10.00px;font-size:11.7px;font-weight:normal;color:#1b1b1b;letter-spacing:0.007px">Техническое обслуживание эле</div>
<div class="t" style="left:181.50px;top:45.00px;font-size:13.2px;font-weight:normal;color:#6e6e6e;letter-spacing:0.167px">Файл</div>
<div class="t" style="left:239.00px;top:45.00px;font-size:13.2px;font-weight:normal;color:#1b1b1b;letter-spacing:0.171px">F:/Разработка%20сайтов</div>
<div class="t" style="left:397.00px;top:45.00px;font-size:13.2px;font-weight:normal;color:#1b1b1b;letter-spacing:0.346px">/Сайт%20обслуживание%20эл.установокМинск</div>
<div class="t" style="left:702.80px;top:45.00px;font-size:13.2px;font-weight:normal;color:#1b1b1b;letter-spacing:0.340px">/Папка%20для%20сайта/index.html</div>
<div class="t" style="left:140.60px;top:77.00px;font-size:11.7px;font-weight:normal;color:#4a4a4a;letter-spacing:0.025px">Обновить (Ctrl+R)</div>
<div class="t" style="left:88.00px;top:997.00px;font-size:14.6px;font-weight:normal;color:#3a3a3a;letter-spacing:-0.034px">Введите здесь текст для поиска</div>
<div class="t" style="left:989.50px;top:998.00px;font-size:14px;font-weight:normal;color:#ffffff;letter-spacing:0.167px">-3°C</div>
<div class="t" style="left:1131.50px;top:998.00px;font-size:11.7px;font-weight:normal;color:#ffffff;letter-spacing:-0.250px">РУС</div>
<div class="t" style="left:1179.00px;top:989.00px;font-size:11.7px;font-weight:normal;color:#ffffff;letter-spacing:-0.300px">21:03</div>
<div class="t" style="left:1166.00px;top:1007.00px;font-size:11.7px;font-weight:normal;color:#ffffff;letter-spacing:-0.389px">21.01.2022</div>
</div>
</body></html>
